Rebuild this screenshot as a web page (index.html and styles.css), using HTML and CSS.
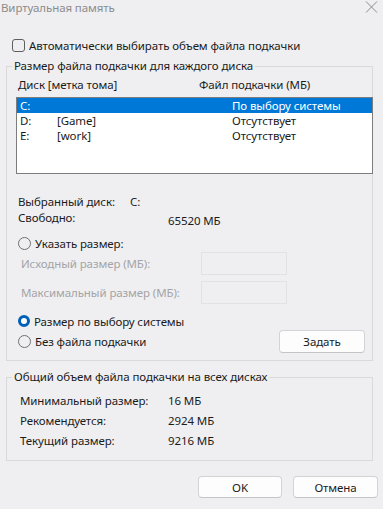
FILE: index.html
```html
<!DOCTYPE html>
<html>
<head>
    <title>Виртуальная память</title>
    <link rel="stylesheet" href="styles.css">
</head>
<body>
    <div class="dialog">

        <div class="title-bar">
            <span class="title-text">Виртуальная память</span>
            <svg class="close-icon" width="13" height="12" viewBox="0 0 13 12">
                <path d="M1 0.5 L12 11.5 M12 0.5 L1 11.5" stroke="#8a8a8a" stroke-width="1" fill="none"/>
            </svg>
        </div>

        <div class="auto-row">
            <span class="checkbox"></span>
            <span>Автоматически выбирать объем файла подкачки</span>
        </div>

        <fieldset class="group group-disks">
            <legend>Размер файла подкачки для каждого диска</legend>

            <div class="list-header">
                <span class="col-disk">Диск [метка тома]</span>
                <span>Файл подкачки (МБ)</span>
            </div>

            <div class="disk-list">
                <div class="disk-row selected">
                    <span class="col-letter">C:</span>
                    <span class="col-label"></span>
                    <span>По выбору системы</span>
                </div>
                <div class="disk-row">
                    <span class="col-letter">D:</span>
                    <span class="col-label">[Game]</span>
                    <span>Отсутствует</span>
                </div>
                <div class="disk-row">
                    <span class="col-letter">E:</span>
                    <span class="col-label">[work]</span>
                    <span>Отсутствует</span>
                </div>
            </div>

            <div class="info-row first-info">
                <span class="info-label">Выбранный диск:</span>
                <span>C:</span>
            </div>
            <div class="info-row free-row">
                <span class="info-label wide">Свободно:</span>
                <span class="free-value">65520 МБ</span>
            </div>

            <div class="radio-row custom-row">
                <span class="radio"></span>
                <span>Указать размер:</span>
            </div>

            <div class="size-row">
                <span class="size-label">Исходный размер (МБ):</span>
                <span class="size-input"></span>
            </div>
            <div class="size-row second-size">
                <span class="size-label">Максимальный размер (МБ):</span>
                <span class="size-input"></span>
            </div>

            <div class="radio-row system-row">
                <span class="radio checked"></span>
                <span>Размер по выбору системы</span>
            </div>

            <div class="radio-row none-row">
                <span class="radio"></span>
                <span>Без файла подкачки</span>
                <button class="btn btn-set">Задать</button>
            </div>
        </fieldset>

        <fieldset class="group group-total">
            <legend>Общий объем файла подкачки на всех дисках</legend>
            <div class="total-rows">
                <div class="total-row"><span class="total-label">Минимальный размер:</span><span>16 МБ</span></div>
                <div class="total-row"><span class="total-label">Рекомендуется:</span><span>2924 МБ</span></div>
                <div class="total-row"><span class="total-label">Текущий размер:</span><span>9216 МБ</span></div>
            </div>
        </fieldset>

        <div class="dialog-buttons">
            <button class="btn btn-ok">OK</button>
            <button class="btn btn-cancel">Отмена</button>
        </div>

    </div>
</body>
</html>
```

FILE: styles.css
```css
html, body {
    margin: 0;
    background-color: #efeff1;
}

body {
    font-family: "Noto Sans", "Open Sans", sans-serif;
    font-size: 11.5px;
    letter-spacing: -0.1px;
    color: #1b1b1b;
}

.dialog {
    width: 383px;
    height: 509px;
    overflow: hidden;
}

/* title */
.title-bar {
    height: 30px;
    box-sizing: border-box;
    display: flex;
    justify-content: space-between;
    align-items: flex-start;
    padding: 1px 5px 0 1px;
}

.title-text {
    line-height: 14px;
    color: #8c8c8c;
}

.close-icon {
    margin-top: 0;
}

/* checkbox row */
.auto-row {
    display: flex;
    align-items: center;
    height: 14px;
    margin-top: 8px;
    padding-left: 12px;
}

.checkbox {
    width: 11px;
    height: 11px;
    border: 1px solid #5e5e5e;
    border-radius: 3px;
    margin-right: 4px;
}

/* group boxes */
.group {
    margin: 7px 0 0 6px;
    width: 367px;
    box-sizing: border-box;
    padding: 0 0 7px 0;
    border: 1px solid #d9d9db;
    min-width: 0;
}

.group legend {
    margin-left: 5px;
    padding: 0 2px;
    line-height: 14px;
}

.list-header {
    display: flex;
    height: 14px;
    line-height: 14px;
    margin-top: 5px;
    padding-left: 11px;
}

.col-disk {
    width: 181px;
}

.disk-list {
    margin: 5px 0 0 9px;
    width: 357px;
    height: 77px;
    box-sizing: border-box;
    border: 1px solid #7d7d7d;
    background-color: #ffffff;
}

.disk-row {
    display: flex;
    height: 15px;
    line-height: 15px;
    padding-left: 3px;
}

.disk-row.selected {
    background-color: #0078d7;
    color: #ffffff;
}

.col-letter {
    width: 37px;
}

.col-label {
    width: 175px;
}

/* selected disk info */
.info-row {
    display: flex;
    align-items: flex-start;
    height: 14px;
    line-height: 14px;
    padding-left: 11px;
}

.first-info {
    margin-top: 21px;
}

.free-row {
    margin-top: 2px;
}

.info-label {
    width: 112px;
}

.info-label.wide {
    width: 150px;
}

.free-value {
    padding-top: 3px;
}

/* radios */
.radio-row {
    display: flex;
    align-items: center;
    padding-left: 11px;
    height: 14px;
}

.custom-row {
    margin-top: 11px;
}

.system-row {
    margin-top: 10px;
}

.none-row {
    height: 23px;
    margin-top: 2px;
}

.radio {
    width: 11px;
    height: 11px;
    border: 1px solid #6f6f6f;
    border-radius: 50%;
    margin-right: 4px;
    box-sizing: content-box;
}

.radio.checked {
    width: 6px;
    height: 6px;
    border: 3.5px solid #005fb8;
    background-color: #ffffff;
}

.size-row {
    display: flex;
    align-items: center;
    height: 23px;
    margin-top: 2px;
    padding-left: 14px;
    color: #a4a4a6;
}

.second-size {
    margin-top: 6px;
}

.size-label {
    width: 180px;
}

.size-input {
    width: 86px;
    height: 23px;
    box-sizing: border-box;
    border: 1px solid #e2e2e4;
}

/* buttons */
.btn {
    font-family: inherit;
    font-size: 11.5px;
    letter-spacing: -0.1px;
    color: #1b1b1b;
    background-color: #fdfdfd;
    border: 1px solid #d3d3d5;
    border-bottom-color: #c4c4c6;
    border-radius: 4px;
    padding: 0;
    cursor: pointer;
}

.btn-set {
    margin-left: auto;
    margin-right: 7px;
    width: 86px;
    height: 23px;
}

/* totals */
.group-total {
    margin-top: 9px;
    padding-bottom: 9px;
}

.total-rows {
    margin-top: 7px;
}

.total-row {
    display: flex;
    height: 20px;
    line-height: 20px;
    padding-left: 13px;
}

.total-label {
    width: 148px;
}

.dialog-buttons {
    display: flex;
    justify-content: flex-end;
    gap: 11px;
    margin-top: 15px;
    padding-right: 5px;
}

.btn-ok {
    width: 84px;
    height: 22px;
}

.btn-cancel {
    width: 85px;
    height: 22px;
}
```
